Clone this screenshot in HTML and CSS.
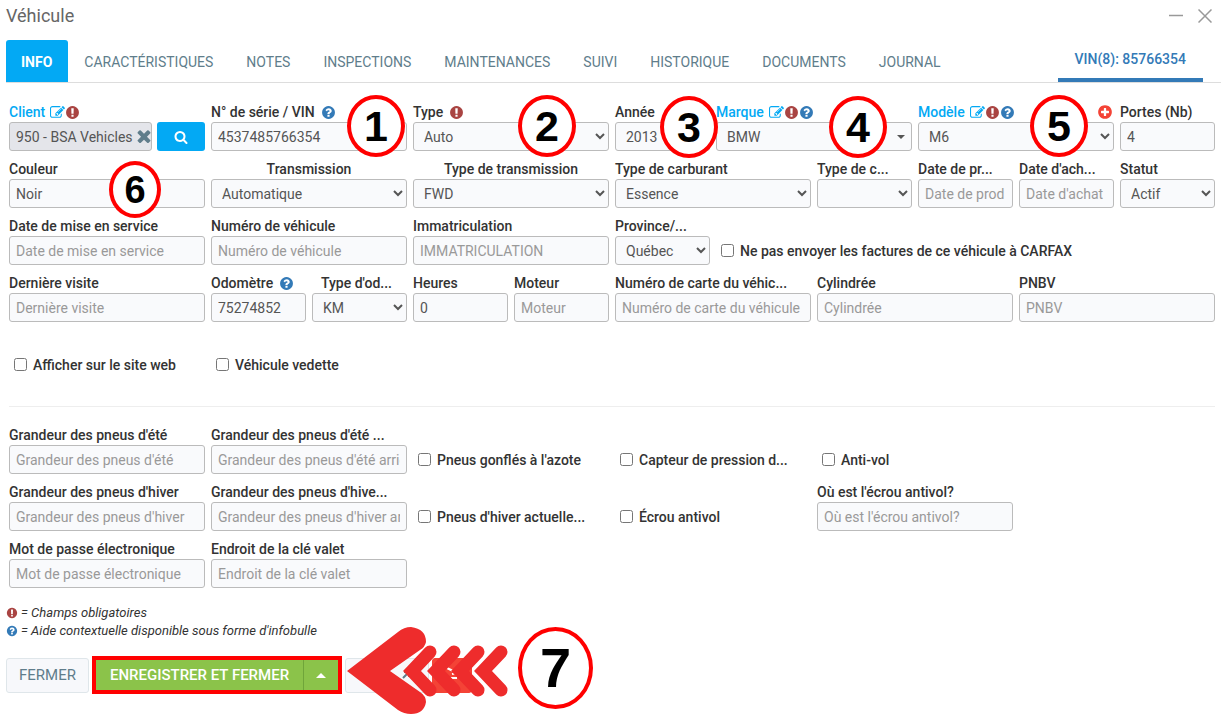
FILE: index.html
```html
<!DOCTYPE html>
<html lang="fr">
<head>
<meta charset="utf-8">
<meta name="viewport" content="width=device-width, initial-scale=1">
<title>Véhicule</title>
<link rel="stylesheet" href="styles.css">
</head>
<body>
<svg class="sprite" aria-hidden="true">
  <symbol id="help" viewBox="0 0 1792 1792"><path d="M1024 1376v-192q0-14-9-23t-23-9h-192q-14 0-23 9t-9 23v192q0 14 9 23t23 9h192q14 0 23-9t9-23zm256-672q0-88-55.5-163t-138.5-116-170-41q-243 0-371 213-15 24 8 42l132 100q7 6 19 6 16 0 25-12 53-68 86-92 34-24 86-24 48 0 85.5 26t37.5 59q0 38-20 61t-68 45q-63 28-115.5 86.5t-52.5 125.5v36q0 14 9 23t23 9h192q14 0 23-9t9-23q0-19 21.5-49.5t54.5-49.5q32-18 49-28.5t46-35 44.5-48 28-60.5 12.5-81zm384 192q0 209-103 385.5t-279.5 279.5-385.5 103-385.5-103-279.5-279.5-103-385.5 103-385.5 279.5-279.5 385.5-103 385.5 103 279.5 279.5 103 385.5z"/></symbol>
  <symbol id="required" viewBox="0 0 1792 1792"><path d="M896 128q209 0 385.5 103t279.5 279.5 103 385.5-103 385.5-279.5 279.5-385.5 103-385.5-103-279.5-279.5-103-385.5 103-385.5 279.5-279.5 385.5-103zm128 1247v-190q0-14-9-23.5t-22-9.5h-192q-13 0-23 10t-10 23v190q0 13 10 23t23 10h192q13 0 22-9.5t9-23.5zm-2-344l18-621q0-12-10-18-10-8-24-8h-220q-14 0-24 8-10 6-10 18l17 621q0 10 10 17.5t24 7.5h185q14 0 23.5-7.5t10.5-17.5z"/></symbol>
  <symbol id="plus" viewBox="0 0 1792 1792"><path d="M1344 960v-128q0-26-19-45t-45-19h-256v-256q0-26-19-45t-45-19h-128q-26 0-45 19t-19 45v256h-256q-26 0-45 19t-19 45v128q0 26 19 45t45 19h256v256q0 26 19 45t45 19h128q26 0 45-19t19-45v-256h256q26 0 45-19t19-45zm320-64q0 209-103 385.5t-279.5 279.5-385.5 103-385.5-103-279.5-279.5-103-385.5 103-385.5 279.5-279.5 385.5-103 385.5 103 279.5 279.5 103 385.5z"/></symbol>
  <symbol id="search" viewBox="0 0 1792 1792"><path d="M1216 832q0-185-131.5-316.5t-316.5-131.5-316.5 131.5-131.5 316.5 131.5 316.5 316.5 131.5 316.5-131.5 131.5-316.5zm512 832q0 52-38 90t-90 38q-54 0-90-38l-343-342q-179 124-399 124-143 0-273.5-55.5t-225-150-150-225-55.5-273.5 55.5-273.5 150-225 225-150 273.5-55.5 273.5 55.5 225 150 150 225 55.5 273.5q0 220-124 399l343 343q37 37 37 90z"/></symbol>
  <symbol id="times" viewBox="250 250 1292 1292"><path d="M1490 1322q0 40-28 68l-136 136q-28 28-68 28t-68-28l-294-294-294 294q-28 28-68 28t-68-28l-136-136q-28-28-28-68t28-68l294-294-294-294q-28-28-28-68t28-68l136-136q28-28 68-28t68 28l294 294 294-294q28-28 68-28t68 28l136 136q28 28 28 68t-28 68l-294 294 294 294q28 28 28 68z"/></symbol>
  <symbol id="edit" viewBox="0 0 1792 1792"><path d="M888 1184l116-116-152-152-116 116v56h96v96h56zm440-720q-16-16-33 1l-350 350q-17 17-1 33t33-1l350-350q17-17 1-33zm80 594v190q0 119-84.5 203.5t-203.5 84.5h-832q-119 0-203.5-84.5t-84.5-203.5v-832q0-119 84.5-203.5t203.5-84.5h832q63 0 117 25 15 7 18 23 3 17-9 29l-49 49q-14 14-32 8-23-6-45-6h-832q-66 0-113 47t-47 113v832q0 66 47 113t113 47h832q66 0 113-47t47-113v-126q0-13 9-22l64-64q15-15 35-7t20 29zm-96-738l288 288-672 672h-288v-288zm444 132l-92 92-288-288 92-92q28-28 68-28t68 28l152 152q28 28 28 68t-28 68z"/></symbol>
</svg>

<header class="titlebar">
  <h1 class="title">Véhicule</h1>
  <div class="window-buttons">
    <button type="button" aria-label="Réduire"><svg width="14" height="14" viewBox="0 0 14 14"><path d="M0 6.500h14" stroke="#999" stroke-width="1.500"/></svg></button>
    <button type="button" aria-label="Fermer la fenêtre"><svg width="14" height="14" viewBox="0 0 14 14"><path d="M.5.500l13 13M13.500.500l-13 13" stroke="#999" stroke-width="1.500"/></svg></button>
  </div>
</header>

<nav class="tabs">
  <a class="tab active" href="#info">INFO</a>
  <a class="tab" href="#caracteristiques">CARACTÉRISTIQUES</a>
  <a class="tab" href="#notes">NOTES</a>
  <a class="tab" href="#inspections">INSPECTIONS</a>
  <a class="tab" href="#maintenances">MAINTENANCES</a>
  <a class="tab" href="#suivi">SUIVI</a>
  <a class="tab" href="#historique">HISTORIQUE</a>
  <a class="tab" href="#documents">DOCUMENTS</a>
  <a class="tab" href="#journal">JOURNAL</a>
  <a class="vin-tab" href="#vin">VIN(8): 85766354</a>
</nav>

<form class="form">
  <div class="grid">
    <div class="field w2">
      <div class="label"><label class="link" for="client">Client</label><svg class="icon blue gap"><use href="#edit"/></svg><svg class="icon maroon"><use href="#required"/></svg></div>
      <div class="client">
        <div class="client-box"><input class="control disabled" id="client" value="950 - BSA Vehicles" readonly><button class="clear" type="button" aria-label="Effacer"><svg><use href="#times"/></svg></button></div>
        <button class="search" type="button" aria-label="Rechercher"><svg><use href="#search"/></svg></button>
      </div>
    </div>
    <div class="field w2"><div class="label"><label for="serie">N° de série / VIN</label><svg class="icon navy space"><use href="#help"/></svg></div><input class="control" id="serie" value="4537485766354"></div>
    <div class="field w2"><div class="label"><label for="type">Type</label><svg class="icon maroon space"><use href="#required"/></svg></div><select class="control" id="type"><option>Auto</option></select></div>
    <div class="field"><div class="label"><label for="annee">Année</label></div><select class="control" id="annee"><option>2013</option></select></div>
    <div class="field w2"><div class="label"><label class="link" for="marque">Marque</label><svg class="icon blue gap"><use href="#edit"/></svg><svg class="icon maroon"><use href="#required"/></svg><svg class="icon navy"><use href="#help"/></svg></div><div class="caret-box"><select class="control plain" id="marque"><option>BMW</option></select></div></div>
    <div class="field w2"><div class="label"><label class="link" for="modele">Modèle</label><svg class="icon blue gap"><use href="#edit"/></svg><svg class="icon maroon"><use href="#required"/></svg><svg class="icon navy"><use href="#help"/></svg><button class="add" type="button" aria-label="Ajouter un modèle"><svg><use href="#plus"/></svg></button></div><select class="control" id="modele"><option>M6</option></select></div>
    <div class="field"><div class="label"><label for="portes">Portes (Nb)</label></div><input class="control" id="portes" value="4"></div>

    <div class="field w2"><div class="label"><label for="couleur">Couleur</label></div><input class="control" id="couleur" value="Noir"></div>
    <div class="field w2"><div class="label centered"><label for="transmission">Transmission</label></div><select class="control" id="transmission"><option>Automatique</option></select></div>
    <div class="field w2"><div class="label centered"><label for="type-trans">Type de transmission</label></div><select class="control" id="type-trans"><option>FWD</option></select></div>
    <div class="field w2"><div class="label"><label for="carburant">Type de carburant</label></div><select class="control" id="carburant"><option>Essence</option></select></div>
    <div class="field"><div class="label"><label for="type-c">Type de c...</label></div><select class="control" id="type-c"><option></option></select></div>
    <div class="field"><div class="label"><label for="date-prod">Date de pr...</label></div><input class="control" id="date-prod" placeholder="Date de prod"></div>
    <div class="field"><div class="label"><label for="date-achat">Date d'ach...</label></div><input class="control" id="date-achat" placeholder="Date d'achat"></div>
    <div class="field"><div class="label"><label for="statut">Statut</label></div><select class="control" id="statut"><option>Actif</option></select></div>

    <div class="field w2"><div class="label"><label for="service">Date de mise en service</label></div><input class="control" id="service" placeholder="Date de mise en service"></div>
    <div class="field w2"><div class="label"><label for="numero">Numéro de véhicule</label></div><input class="control" id="numero" placeholder="Numéro de véhicule"></div>
    <div class="field w2"><div class="label"><label for="immat">Immatriculation</label></div><input class="control" id="immat" placeholder="IMMATRICULATION"></div>
    <div class="field"><div class="label"><label for="province">Province/...</label></div><select class="control" id="province"><option>Québec</option></select></div>
    <label class="check w5"><input type="checkbox">Ne pas envoyer les factures de ce véhicule à CARFAX</label>

    <div class="field w2"><div class="label"><label for="visite">Dernière visite</label></div><input class="control" id="visite" placeholder="Dernière visite"></div>
    <div class="field"><div class="label"><label for="odometre">Odomètre</label><svg class="icon navy space"><use href="#help"/></svg></div><input class="control" id="odometre" value="75274852"></div>
    <div class="field"><div class="label indented"><label for="type-odo">Type d'od...</label></div><select class="control" id="type-odo"><option>KM</option></select></div>
    <div class="field"><div class="label"><label for="heures">Heures</label></div><input class="control" id="heures" value="0"></div>
    <div class="field"><div class="label"><label for="moteur">Moteur</label></div><input class="control" id="moteur" placeholder="Moteur"></div>
    <div class="field w2"><div class="label"><label for="carte">Numéro de carte du véhic...</label></div><input class="control" id="carte" placeholder="Numéro de carte du véhicule"></div>
    <div class="field w2"><div class="label"><label for="cylindree">Cylindrée</label></div><input class="control" id="cylindree" placeholder="Cylindrée"></div>
    <div class="field w2"><div class="label"><label for="pnbv">PNBV</label></div><input class="control" id="pnbv" placeholder="PNBV"></div>

    <label class="check w2"><input type="checkbox">Afficher sur le site web</label>
    <label class="check w2"><input type="checkbox">Véhicule vedette</label>
  </div>

  <hr class="rule">

  <div class="grid">
    <div class="field w2"><div class="label"><label for="ete-av">Grandeur des pneus d'été</label></div><input class="control" id="ete-av" placeholder="Grandeur des pneus d'été"></div>
    <div class="field w2"><div class="label"><label for="ete-ar">Grandeur des pneus d'été ...</label></div><input class="control" id="ete-ar" placeholder="Grandeur des pneus d'été arrière"></div>
    <label class="check w2"><input type="checkbox">Pneus gonflés à l'azote</label>
    <label class="check w2"><input type="checkbox">Capteur de pression d...</label>
    <label class="check w4"><input type="checkbox">Anti-vol</label>

    <div class="field w2"><div class="label"><label for="hiver-av">Grandeur des pneus d'hiver</label></div><input class="control" id="hiver-av" placeholder="Grandeur des pneus d'hiver"></div>
    <div class="field w2"><div class="label"><label for="hiver-ar">Grandeur des pneus d'hive...</label></div><input class="control" id="hiver-ar" placeholder="Grandeur des pneus d'hiver arrière"></div>
    <label class="check w2"><input type="checkbox">Pneus d'hiver actuelle...</label>
    <label class="check w2"><input type="checkbox">Écrou antivol</label>
    <div class="field w2"><div class="label"><label for="ecrou">Où est l'écrou antivol?</label></div><input class="control" id="ecrou" placeholder="Où est l'écrou antivol?"></div>

    <div class="field w2 first"><div class="label"><label for="passe">Mot de passe électronique</label></div><input class="control" id="passe" placeholder="Mot de passe électronique"></div>
    <div class="field w2"><div class="label"><label for="valet">Endroit de la clé valet</label></div><input class="control" id="valet" placeholder="Endroit de la clé valet"></div>
  </div>
</form>

<div class="legend">
  <p><svg class="maroon"><use href="#required"/></svg>= Champs obligatoires</p>
  <p><svg class="navy"><use href="#help"/></svg>= Aide contextuelle disponible sous forme d'infobulle</p>
</div>

<footer class="actions">
  <button class="btn" type="button">FERMER</button>
  <div class="save">
    <button class="save-main" type="button">ENREGISTRER ET FERMER</button>
    <button class="save-more" type="button" aria-label="Autres options"><svg width="10" height="6" viewBox="0 0 10 6"><path d="M0 6L5 1l5 5z" fill="#fff"/></svg></button>
  </div>
  <button class="btn share" type="button" aria-label="Ouvrir"><svg width="8" height="8" viewBox="0 0 8 8"><path d="M2 1h5v5M7 1L1 7" fill="none" stroke="#607d8b" stroke-width="2"/></svg></button>
  <button class="btn danger" type="button" aria-label="Supprimer"><svg width="12" height="14" viewBox="0 0 12 14"><path d="M1 2l6 3M4 12h7M6 8l5-1" stroke="#fff" stroke-width="2"/></svg></button>
</footer>

<div class="marker m1">1</div>
<div class="marker m2">2</div>
<div class="marker m3">3</div>
<div class="marker m4">4</div>
<div class="marker m5">5</div>
<div class="marker m6">6</div>
<div class="marker m7">7</div>
<svg class="arrow" width="162" height="88" viewBox="0 0 162 88">
  <path d="M0 44L51 5Q57 0 64 0Q79 2 79 15Q78 20 73 23L43 44L73 65Q79 69 79 75Q77 87 64 87Q57 87 51 83Z"/>
  <g class="chevrons">
    <path d="M83 25L65 44L83 63"/>
    <path d="M107 25L89 44L107 63"/>
    <path d="M131 25L113 44L131 63"/>
    <path d="M154 25L136 44L154 63"/>
  </g>
</svg>
</body>
</html>
```
FILE: styles.css
```css
* { box-sizing: border-box; }

body {
  margin: 0;
  position: relative;
  min-height: 100vh;
  font-family: Roboto, "Liberation Sans", sans-serif;
  font-size: 14px;
  line-height: 20px;
  color: #333;
  background: #fff;
}

button, input, select { font: inherit; margin: 0; }
button { padding: 0; border: 0; background: none; cursor: pointer; }
svg { fill: currentColor; flex: none; }
.sprite { position: absolute; width: 0; height: 0; }

.blue { color: #03a9f4; }
.maroon { color: #a94442; }
.navy { color: #337ab7; }

.titlebar {
  display: flex;
  justify-content: space-between;
  padding: 4px 9px 0 6px;
  height: 40px;
}
.title { margin: 0; font-size: 18px; line-height: 24px; font-weight: 400; color: #666; }
.window-buttons { display: flex; gap: 15px; height: 24px; }
.window-buttons button { display: flex; align-items: center; }

.tabs {
  display: flex;
  margin-left: 6px;
  height: 43px;
  border-bottom: 1px solid #ddd;
}
.tab {
  padding: 12px 17px 0 16px;
  color: #607d8b;
  text-decoration: none;
}
.tab.active {
  padding: 12px 16px 0 15px;
  border-radius: 3px 3px 0 0;
  background: #03a9f4;
  color: #fff;
  font-weight: 700;
}
.vin-tab {
  margin: 0 18px 0 auto;
  padding: 9px 17px 0;
  border-bottom: 4px solid #337ab7;
  color: #337ab7;
  font-weight: 500;
  text-decoration: none;
}

.form { padding: 19px 6px 0 9px; }
.grid {
  display: grid;
  grid-template-columns: repeat(12, minmax(0, 1fr));
  gap: 8px 6px;
}
.w2 { grid-column: span 2; }
.w4 { grid-column: span 4; }
.w5 { grid-column: span 5; }
.first { grid-column: 1 / span 2; }

.label { display: flex; align-items: center; height: 20px; font-weight: 500; white-space: nowrap; }
.label.centered { justify-content: center; }
.label.indented { padding-left: 9px; }
.link { color: #03a9f4; }
.icon { width: 15px; height: 15px; }
.icon.gap { margin-left: 5px; }
.icon.space { margin-left: 6px; }
.add { display: flex; margin-left: auto; margin-right: 1px; color: #f44336; }
.add svg { width: 16px; height: 16px; }

.control {
  display: block;
  width: 100%;
  height: 29px;
  padding: 0 6px;
  border: 1px solid #bbb;
  border-radius: 3px;
  background-color: #f9fafc;
  color: #555;
}
.control::placeholder { color: #999; }
select.control { padding: 0 0 0 6px; }
select.plain { appearance: none; padding-left: 10px; }
.control.disabled { background-color: #e4e5ea; padding-right: 0; }

.client { display: flex; gap: 5px; }
.client-box { flex: 1; position: relative; min-width: 0; }
.clear { position: absolute; right: 1px; top: 7px; display: flex; color: #607d8b; }
.clear svg { width: 14px; height: 14px; }
.search {
  display: flex;
  align-items: center;
  justify-content: center;
  width: 48px;
  height: 29px;
  border-radius: 3px;
  background: #03a9f4;
  color: #fff;
}
.search svg { width: 14px; height: 14px; }

.caret-box { position: relative; }
.caret-box::after {
  content: "";
  position: absolute;
  right: 7px;
  top: 13px;
  border: 4px solid transparent;
  border-top-color: #555;
  border-bottom: 0;
}

.check {
  display: flex;
  align-items: center;
  gap: 6px;
  height: 29px;
  margin-top: 20px;
  padding-left: 5px;
  font-weight: 500;
  white-space: nowrap;
}
.check input { width: 13px; height: 13px; }

.rule { margin: 27px 0 18px; border: 0; border-top: 1px solid #eee; }

.legend { padding: 16px 6px 0; font-size: 13px; line-height: 18px; font-style: italic; }
.legend p { display: flex; align-items: center; gap: 3px; margin: 0; }
.legend svg { width: 12px; height: 12px; }

.actions { display: flex; align-items: center; gap: 3px; padding: 16px 6px 16px; font-size: 15px; }
.btn {
  height: 35px;
  padding: 0 12px;
  border: 1px solid #dfe6ea;
  border-radius: 3px;
  background: #f7f8fb;
  color: #607d8b;
}
.save { display: flex; height: 38px; border: 4px solid #f00; background: #8bc34a; color: #fff; }
.save-main { padding: 0 14px; color: #fff; font-weight: 500; }
.save-more { display: flex; align-items: center; justify-content: center; width: 35px; border-left: 1px solid #6fa53a; }
.btn.share { display: flex; align-items: center; width: 84px; padding: 0 0 0 56px; }
.btn.danger { width: 40px; padding: 0; border-color: #f44336; background: #f44336; }

.marker {
  position: absolute;
  display: flex;
  align-items: center;
  justify-content: center;
  width: 58px;
  height: 62px;
  border: 4px solid #f00;
  border-radius: 50%;
  background: #fff;
  color: #000;
  font-family: "Liberation Sans", Arial, sans-serif;
  font-size: 43px;
  font-weight: 700;
}
.m1 { left: 347px; top: 95px; }
.m2 { left: 518px; top: 95px; }
.m3 { left: 660px; top: 96px; }
.m4 { left: 829px; top: 96px; }
.m5 { left: 1030px; top: 95px; }
.m6 { left: 109px; top: 161px; width: 52px; height: 57px; font-size: 38px; }
.m7 { left: 518px; top: 627px; width: 75px; height: 82px; font-size: 56px; }
.arrow { position: absolute; left: 347px; top: 627px; fill: #ee2c2c; }
.chevrons { fill: none; stroke: #ee2c2c; stroke-width: 13; stroke-linecap: round; }
```
